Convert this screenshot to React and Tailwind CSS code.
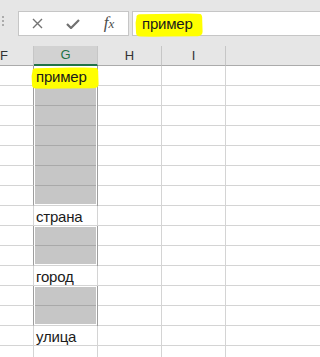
import React from "react";

const gray = (n) =>
    Array.from({ length: n }, (_, i) => ({ gray: true, first: i === 0, last: i === n - 1 }));

const ROWS = [
    { text: "пример", hl: true },
    ...gray(6),
    { text: "страна" },
    ...gray(2),
    { text: "город" },
    ...gray(2),
    { text: "улица" },
    {},
];

function Highlight({ className }) {
    // marker-style yellow stroke
    return (
        <svg className={className} viewBox="0 0 68 22" preserveAspectRatio="none">
            <path
                d="M1.5 4 Q1 1.5 5 1.2 L40 0.6 Q62 0.2 65.5 1 Q67.5 2 67.2 6 L67.6 17 Q67.5 21 63 21.2 L30 21.6 Q8 21.8 3.5 21.3 Q0.8 20.8 1 17 L0.6 9 Z"
                fill="#ffff00"
            />
        </svg>
    );
}

function GCell({ row }) {
    if (row.gray) {
        return (
            <div className="w-16 shrink-0 border-r border-[#9e9e9e] flex flex-col px-px bg-white">
                {row.first && <div className="h-px shrink-0" />}
                <div className="flex-1 bg-[#c6c6c6]" />
                {row.last ? (
                    <>
                        <div className="h-px shrink-0 bg-white" />
                        <div className="h-px shrink-0 -mx-px bg-[#d4d4d4]" />
                    </>
                ) : (
                    <div className="h-px shrink-0 bg-[#a9a9a9]" />
                )}
            </div>
        );
    }
    return (
        <div
            className={`relative w-16 shrink-0 border-b border-b-[#d4d4d4] border-r flex items-end pl-[2px] ${
                row.hl ? "border-r-[#9e9e9e]" : "border-r-[#d4d4d4]"
            }`}
        >
            {row.hl && <Highlight className="absolute -left-[3px] top-px w-[68px] h-[22px]" />}
            {row.text && (
                <span className="relative leading-4 text-[15px] tracking-[-0.2px] text-[#1b1b1b] whitespace-nowrap">
                    {row.text}
                </span>
            )}
        </div>
    );
}

function Row({ row }) {
    const dark = row.gray || row.hl;
    return (
        <div className="flex h-5 shrink-0">
            <div
                className={`w-[34px] shrink-0 border-b border-b-[#d4d4d4] border-r ${
                    dark ? "border-r-[#9e9e9e]" : "border-r-[#d4d4d4]"
                }`}
            />
            <GCell row={row} />
            <div className="w-16 shrink-0 border-b border-r border-[#d4d4d4]" />
            <div className="w-16 shrink-0 border-b border-r border-[#d4d4d4]" />
            <div className="flex-1 border-b border-[#d4d4d4]" />
        </div>
    );
}

export default function App() {
    return (
        <div className="w-full h-[357px] overflow-hidden bg-white flex flex-col font-['Liberation_Sans',Arial,sans-serif]">
            {/* formula bar */}
            <div className="h-[46px] shrink-0 bg-[#e6e6e6] flex items-start pt-[11px]">
                <div className="w-[18px] shrink-0 flex flex-col gap-[2px] pt-[5px] pl-[2px]">
                    <div className="w-[2px] h-[2px] bg-[#ababab]" />
                    <div className="w-[2px] h-[2px] bg-[#ababab]" />
                    <div className="w-[2px] h-[2px] bg-[#ababab]" />
                </div>
                <div className="w-[111px] h-[25px] shrink-0 bg-white border border-[#c6c6c6] flex items-center">
                    <div className="w-9 flex justify-center">
                        <svg width="11" height="11" viewBox="0 0 11 11">
                            <path d="M1 1 L10 10 M10 1 L1 10" stroke="#737373" strokeWidth="1.4" fill="none" />
                        </svg>
                    </div>
                    <div className="w-9 flex justify-center pt-px">
                        <svg width="14" height="10" viewBox="0 0 14 10">
                            <path d="M1 5 L5 9 L13 1" stroke="#707070" strokeWidth="2.2" fill="none" />
                        </svg>
                    </div>
                    <div className="w-9 flex justify-center items-baseline font-['Liberation_Serif',serif] italic text-[#4d4d4d] leading-4">
                        <span className="text-[17px]">f</span>
                        <span className="text-[13px]">x</span>
                    </div>
                </div>
                <div className="relative ml-[3px] flex-1 h-[25px] bg-white border border-r-0 border-[#c6c6c6] flex items-center pl-[9px]">
                    <Highlight className="absolute left-[2px] top-px w-[68px] h-[24px]" />
                    <span className="relative leading-4 text-[15px] tracking-[-0.2px] text-[#1b1b1b] whitespace-nowrap">
                        пример
                    </span>
                </div>
            </div>

            {/* column headers */}
            <div className="flex h-5 shrink-0 text-[13px] leading-4">
                <div className="w-[34px] shrink-0 bg-[#e6e6e6] border-r border-r-[#c6c6c6] border-b border-b-[#ababab] flex items-center text-[#333]">
                    F
                </div>
                <div className="w-16 shrink-0 bg-[#d2d2d2] border-r border-r-[#c6c6c6] border-b-2 border-b-[#217346] flex items-center justify-center text-[#217346]">
                    G
                </div>
                <div className="w-16 shrink-0 bg-[#e6e6e6] border-r border-r-[#c6c6c6] border-b border-b-[#ababab] flex items-center justify-center text-[#333]">
                    H
                </div>
                <div className="w-16 shrink-0 bg-[#e6e6e6] border-r border-r-[#c6c6c6] border-b border-b-[#ababab] flex items-center justify-center text-[#333]">
                    I
                </div>
                <div className="flex-1 bg-[#e6e6e6] border-b border-b-[#ababab]" />
            </div>

            {/* cells */}
            {ROWS.map((row, i) => (
                <Row key={i} row={row} />
            ))}
        </div>
    );
}
